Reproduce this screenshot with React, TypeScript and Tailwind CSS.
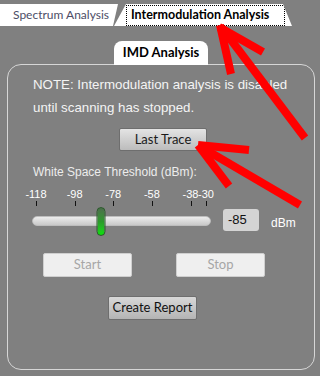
import React from "react";

const ticks = [-118, -98, -78, -58, -38, -30];
const MIN = -118;
const MAX = -30;
const TRACK_START = 4; // px inside scale column where -118 sits
const TRACK_SPAN = 170;
const value = -85;

const pos = (v: number) => TRACK_START + ((v - MIN) / (MAX - MIN)) * TRACK_SPAN;

const ui = { fontFamily: 'Lato, "Noto Sans", sans-serif' };

function Arrows() {
  return (
    <svg className="absolute inset-0 pointer-events-none" width="320" height="376" viewBox="0 0 320 376">
      <g stroke="#ff0000" strokeWidth="8" fill="none" strokeLinecap="butt" strokeLinejoin="miter">
        <line x1="305" y1="138" x2="222" y2="28" />
        <line x1="220" y1="25" x2="231" y2="74" />
        <line x1="219" y1="27" x2="263" y2="52" />
        <line x1="300" y1="205" x2="201" y2="147" />
        <line x1="198" y1="145" x2="249" y2="150" />
        <line x1="198" y1="145" x2="229" y2="186" />
      </g>
    </svg>
  );
}

export default function App() {
  return (
    <div
      className="relative w-[320px] h-[376px] overflow-hidden bg-[#808080]"
      style={{ fontFamily: '"Liberation Sans", Arial, sans-serif' }}
    >
      {/* Tab strip */}
      <div className="flex h-[26px] pt-[4px]" style={ui}>
        <div
          className="w-[120px] h-[22px] bg-white flex items-center pl-[13px] text-[12px] text-[#4d4d66]"
          style={{ clipPath: "polygon(0 0, 118px 0, 113px 100%, 0 100%)" }}
        >
          Spectrum Analysis
        </div>
        <div
          className="ml-[-6px] w-[178px] h-[22px] bg-white relative"
          style={{ clipPath: "polygon(12px 0, 169px 0, 178px 100%, 0 100%)" }}
        >
          <div className="absolute left-[12px] top-[1px] w-[159px] h-[21px] border border-dotted border-black flex items-center pl-[4px] text-[12.5px] font-bold text-black">
            Intermodulation Analysis
          </div>
        </div>
      </div>

      {/* Group tab */}
      <div
        className="relative z-10 ml-[114px] mt-[15px] mb-[-1px] w-[94px] h-[24px] bg-white rounded-t-[8px] flex items-center justify-center text-[13px] font-bold text-black"
        style={ui}
      >
        IMD Analysis
      </div>

      {/* Group box */}
      <div className="ml-[7px] w-[308px] h-[306px] border border-[#d6d6d6] rounded-[14px] flex flex-col">
        <p className="ml-[25px] mt-[8px] text-[13.3px] leading-[23px] text-[#f4f4f4]">
          NOTE: Intermodulation analysis is disabled
          <br />
          until scanning has stopped.
        </p>

        <button
          className="ml-[111px] mt-[9px] w-[88px] h-[23px] rounded-[2px] border border-[#6e6e6e] bg-gradient-to-b from-[#e4e4e4] to-[#bcbcbc] text-[13px] text-[#1a1a1a]"
          style={ui}
        >
          Last Trace
        </button>

        <div className="ml-[25px] mt-[13px] text-[12px] leading-[16px] text-[#ececec]">
          White Space Threshold (dBm):
        </div>

        <div className="flex items-start mt-[7px]">
          {/* Scale column */}
          <div className="ml-[24px] w-[179px] flex flex-col">
            <div className="relative h-[14px]">
              {ticks.map((t) => (
                <span
                  key={t}
                  className="absolute top-0 -translate-x-1/2 text-[11px] leading-[14px] text-white"
                  style={{ left: pos(t) }}
                >
                  {t}
                </span>
              ))}
            </div>
            <div className="relative h-[5px]">
              {ticks.map((t) => (
                <span
                  key={t}
                  className="absolute top-0 w-[1px] h-[5px] bg-[#111]"
                  style={{ left: Math.round(pos(t)) }}
                />
              ))}
            </div>
            <div className="relative mt-[10px] h-[10px] rounded-full border border-[#bdbdbd] bg-gradient-to-b from-[#ececec] to-[#c9c9c9]">
              <div
                className="absolute top-[-10px] w-[9px] h-[29px] -translate-x-1/2 rounded-full bg-gradient-to-b from-[#4a6e4a] via-[#2a9a2a] to-[#06e006] border border-[#2c5a2c]"
                style={{ left: pos(value) }}
              />
            </div>
          </div>

          <div className="ml-[12px] mt-[22px] w-[36px] h-[22px] rounded-[3px] bg-[#d4d4d4] pl-[5px] flex items-center text-[13px] text-[#111]">
            {value}
          </div>
          <div className="ml-[12px] mt-[28px] text-[12px] leading-[16px] text-white">dBm</div>
        </div>

        <div className="flex mt-[22px]" style={ui}>
          <button className="ml-[35px] w-[89px] h-[24px] rounded-[2px] border border-[#cfcfcf] bg-[#efefef] text-[13px] text-[#a6a6a6]">
            Start
          </button>
          <button className="ml-[44px] w-[89px] h-[24px] rounded-[2px] border border-[#cfcfcf] bg-[#efefef] text-[13px] text-[#a6a6a6]">
            Stop
          </button>
        </div>

        <button
          className="ml-[100px] mt-[19px] w-[89px] h-[24px] rounded-[2px] border border-[#6e6e6e] bg-gradient-to-b from-[#d8d8d8] to-[#b4b4b4] text-[13px] text-[#111]"
          style={ui}
        >
          Create Report
        </button>
      </div>

      <Arrows />
    </div>
  );
}
